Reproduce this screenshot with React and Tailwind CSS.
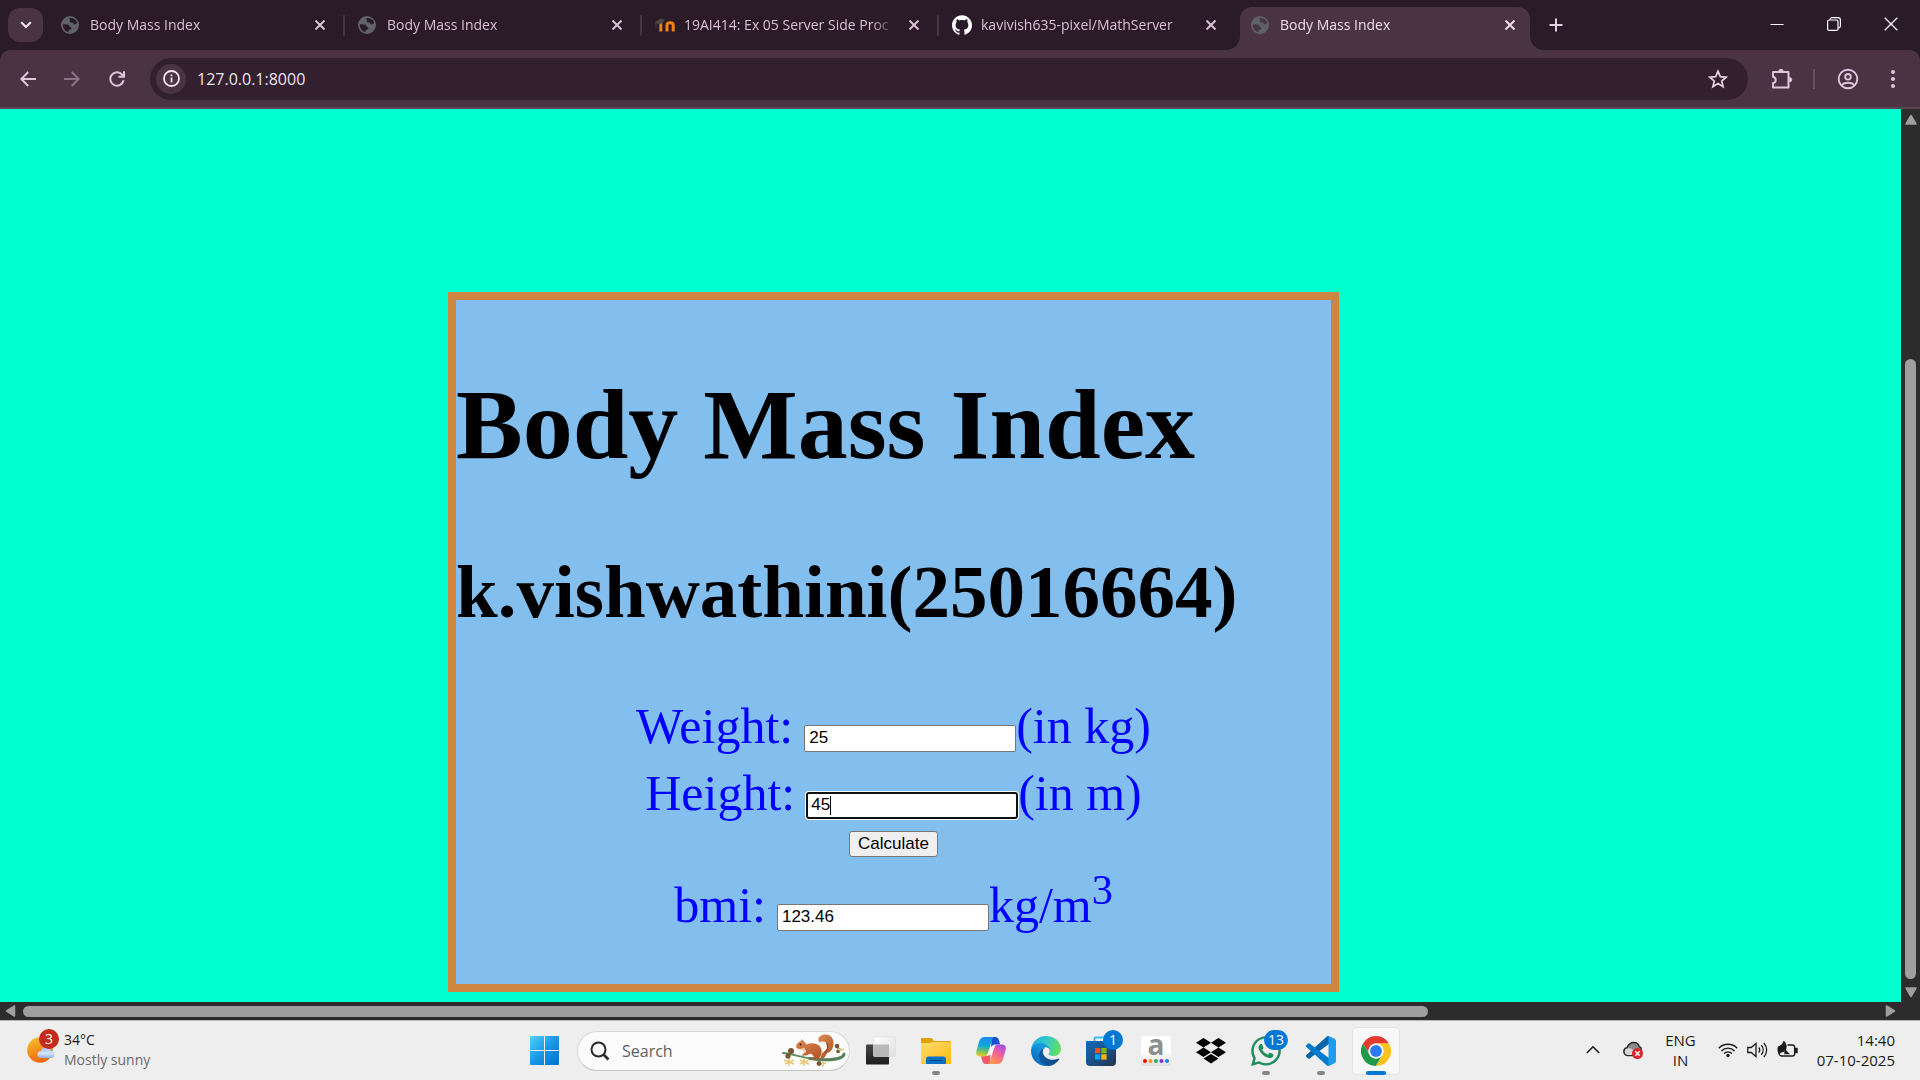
import { FaWhatsapp } from "react-icons/fa";
import { SiGithub } from "react-icons/si";

const UI = "font-['Open_Sans','Noto_Sans',sans-serif]";

function Globe({ cut }) {
  return (
    <svg viewBox="0 0 18 18" className="size-[18px] shrink-0">
      <circle cx="9" cy="9" r="9" fill="#5f6368" />
      <path
        d="M8 2.200c2.200-.6 5 .2 6.600 1.800.8.8 1.300 1.700 1.500 2.700-.8 1.200-1.700 1.900-3 1.700-.9-.2-.9-1-.8-1.800-1.200-.2-2.500.2-3.300-.6-.8-.8.2-1.600.1-2.300-.1-.6-.7-1-1.100-1.500z"
        fill={cut}
      />
      <path
        d="M1.900 8.500c1.600-.4 3.600-.3 5.300.3 1.400.5 1.200 1.900 2.400 2.400 1 .4 1.200 1.400.4 2-.8.5-1.800.4-2.300 1.200-.3.6-.1 1.200-.5 1.800C4.300 15.500 1.700 12.500 1.900 8.500z"
        fill={cut}
      />
    </svg>
  );
}

function Moodle() {
  return (
    <svg viewBox="0 0 20 18" className="h-[18px] w-5 shrink-0">
      <path d="M12 15.500V9.300c0-1.700 1-2.600 3-2.600s3.200.9 3.200 2.600v6.200" fill="none" stroke="#f98012" strokeWidth="3" />
      <path d="M5.800 15.500V6.500" stroke="#f0801a" strokeWidth="3" />
      <path d="M0 6.500 5.500 3l4 .8-4 4.200zM1 7v5" fill="#4d4844" stroke="#4d4844" strokeWidth=".8" />
    </svg>
  );
}

function Cross({ className = "size-[10px]", w = 2 }) {
  return (
    <svg viewBox="0 0 10 10" className={className} fill="none" stroke="currentColor" strokeWidth={w}>
      <path d="M.5.5l9 9M9.500.5l-9 9" />
    </svg>
  );
}

function Tab({ icon, title, active }) {
  return (
    <div
      className={
        active
          ? "relative ml-1 mt-[7px] flex h-[43px] w-[290px] min-w-0 items-center rounded-t-[12px] bg-[#4a3444] pb-[7px] pl-[11px] pr-[11px] text-[#ecdde8]"
          : "flex h-[50px] w-[297px] min-w-0 items-center pl-[13px] text-[#dabfd6]"
      }
    >
      {active && (
        <>
          <svg viewBox="0 0 14 14" className="absolute -left-[14px] bottom-0 size-[14px]">
            <path d="M14 0v14H0A14 14 0 0 0 14 0z" fill="#4a3444" />
          </svg>
          <svg viewBox="0 0 14 14" className="absolute -right-[14px] bottom-0 size-[14px]">
            <path d="M0 0v14h14A14 14 0 0 1 0 0z" fill="#4a3444" />
          </svg>
        </>
      )}
      <span className="flex w-[29px] shrink-0 items-center">{icon}</span>
      <span className="min-w-0 flex-1 overflow-hidden whitespace-nowrap text-[14px] leading-5 [mask-image:linear-gradient(to_right,black_188px,transparent_211px)]">
        {title}
      </span>
      <button aria-label={"Close " + title} className={active ? "flex size-[18px] shrink-0 items-center justify-center" : "mr-[14px] flex size-[18px] shrink-0 items-center justify-center"}>
        <Cross />
      </button>
      {!active && <span className="h-[21px] w-[2px] shrink-0 rounded bg-[#4a3444]" />}
    </div>
  );
}

function TabStrip() {
  return (
    <header className="flex h-[50px] shrink-0 bg-[#2b1b29] pl-2">
      <button aria-label="Search tabs" className="mt-2 mr-[5px] flex h-[34px] w-[35px] shrink-0 items-center justify-center rounded-[12px] bg-[#4a3444] text-[#f0e4ee]">
        <svg viewBox="0 0 12 8" className="h-[8px] w-[12px]" fill="none" stroke="currentColor" strokeWidth="2.200">
          <path d="M1.200 1.200 6 6l4.800-4.800" />
        </svg>
      </button>
      <Tab icon={<Globe cut="#2b1b29" />} title="Body Mass Index" />
      <Tab icon={<Globe cut="#2b1b29" />} title="Body Mass Index" />
      <Tab icon={<Moodle />} title="19AI414: Ex 05 Server Side Proc" />
      <div className="flex min-w-0 [&>div>span:nth-last-child(1)]:bg-transparent">
        <Tab icon={<SiGithub className="size-5 text-white" />} title="kavivish635-pixel/MathServer" />
      </div>
      <Tab active icon={<Globe cut="#4a3444" />} title="Body Mass Index" />
      <button aria-label="New tab" className="ml-[17px] flex h-[50px] w-[18px] shrink-0 items-center justify-center text-[#e6cfe2]">
        <svg viewBox="0 0 14 14" className="size-[14px]" stroke="currentColor" strokeWidth="2">
          <path d="M7 .5v13M.5 7h13" />
        </svg>
      </button>
      <div className="ml-auto flex text-white">
        <button aria-label="Minimize" className="flex h-12 w-[57px] items-center justify-center">
          <svg viewBox="0 0 14 14" className="size-[14px]" stroke="currentColor"><path d="M.5 7.500h13" /></svg>
        </button>
        <button aria-label="Restore" className="flex h-12 w-[57px] items-center justify-center">
          <svg viewBox="0 0 14 14" className="size-[14px]" fill="none" stroke="currentColor" strokeWidth="1.200">
            <rect x=".6" y="3" width="10.400" height="10.400" rx="1.500" />
            <path d="M3.200 2.800V2C3.400 1 4 .6 5 .6h6c1.600 0 2.400.8 2.400 2.400v6c0 1-.4 1.600-1.400 1.800h-.8" />
          </svg>
        </button>
        <button aria-label="Close window" className="flex h-12 w-[58px] items-center justify-center">
          <Cross className="size-[14px]" w={0.9} />
        </button>
      </div>
    </header>
  );
}

function Toolbar() {
  return (
    <div className="h-[59px] shrink-0 bg-[#2b1b29]">
      <nav className="flex h-full items-center rounded-t-[10px] border-b-2 border-[#594652] bg-[#4a3444] pl-[17px] text-[#e0c4dc]">
        <button aria-label="Back" className="flex w-[22px] justify-center">
          <svg viewBox="0 0 16 16" className="size-4" fill="none" stroke="currentColor" strokeWidth="2"><path d="M8.200 1 1.400 8l6.800 7M1.500 8H16" /></svg>
        </button>
        <button aria-label="Forward" className="ml-[22px] flex w-[22px] justify-center text-[#8a7386]">
          <svg viewBox="0 0 16 16" className="size-4" fill="none" stroke="currentColor" strokeWidth="2"><path d="M7.800 1l6.800 7-6.800 7M14.500 8H0" /></svg>
        </button>
        <button aria-label="Reload" className="ml-[23px] flex w-[22px] justify-center">
          <svg viewBox="0 0 16 16" className="size-4" fill="none" stroke="currentColor" strokeWidth="2"><path d="M14.600 9.300A6.700 6.700 0 1 1 13 3.500l1.800 1.700M15 .3v5.500H9.500" /></svg>
        </button>
        <div className="ml-[22px] flex h-[42px] min-w-0 flex-1 items-center rounded-full bg-[#33202f] pr-5 pl-[6px]">
          <button aria-label="Site information" className="flex size-[30px] shrink-0 items-center justify-center rounded-full bg-[#4a3444] text-[#f2e6f0]">
            <svg viewBox="0 0 17 17" className="size-[17px]" fill="none" stroke="currentColor" strokeWidth="1.800">
              <circle cx="8.500" cy="8.500" r="7.500" />
              <path d="M8.500 7.500v5M8.500 4.500v1.800" />
            </svg>
          </button>
          <input aria-label="Address" defaultValue="127.0.0.1:8000" className="ml-[11px] min-w-0 flex-1 bg-transparent text-[16px] leading-6 text-[#efe3ec] outline-none" />
          <button aria-label="Bookmark this page" className="text-[#e6d3e2]">
            <svg viewBox="0 0 20 20" className="size-5" fill="none" stroke="currentColor" strokeWidth="1.700"><path d="M10 2.200 12.300 7.600l5.900.5-4.500 3.900 1.400 5.700-5.100-3.100-5.100 3.100L6.300 12 1.800 8.100l5.900-.5z" /></svg>
          </button>
        </div>
        <button aria-label="Extensions" className="ml-[23px]">
          <svg viewBox="0 0 22 22" className="size-[22px]" fill="none" stroke="currentColor" strokeWidth="2">
            <path d="M3 4h14.500v15.500H2V15c3.600 0 3.600-6 0-6V4z" strokeLinejoin="round" />
            <path d="M7.800 3.500a2.200 2.200 0 0 1 4.400 0zM18.500 9.500a2.200 2.200 0 0 1 0 4.400z" fill="currentColor" stroke="currentColor" strokeWidth="1" />
          </svg>
        </button>
        <span className="ml-5 h-5 w-[2px] bg-[#664f60]" />
        <button aria-label="Profile" className="ml-[22px]">
          <svg viewBox="0 0 22 22" className="size-[22px]" fill="none" stroke="currentColor" strokeWidth="1.900">
            <circle cx="11" cy="11" r="9.300" />
            <circle cx="11" cy="8.800" r="2.800" />
            <path d="M4.500 17c3.500-3 9.500-3 13 0" />
          </svg>
        </button>
        <button aria-label="Chrome menu" className="mr-4 ml-[23px] flex w-[22px] justify-center">
          <svg viewBox="0 0 4 20" className="h-5 w-1" fill="currentColor"><circle cx="2" cy="3" r="2" /><circle cx="2" cy="10" r="2" /><circle cx="2" cy="17" r="2" /></svg>
        </button>
      </nav>
    </div>
  );
}

const FIELD = "h-[27px] w-[212px] rounded-[2px] border border-[#767676] bg-white px-1 font-['Liberation_Sans',Arial,sans-serif] text-[17px] text-black outline-none";

function BmiCard() {
  return (
    <section className="ml-[448px] w-full max-w-[891px] border-8 border-[#cd853f] bg-[#82beee] pb-[50px] font-['Liberation_Serif','Times_New_Roman',serif]">
      <h1 className="mt-[67px] whitespace-nowrap text-[100px] font-bold leading-[115px] text-black">Body Mass Index</h1>
      <h2 className="mt-[67px] whitespace-nowrap text-[75px] font-bold leading-[86px] text-black">k.vishwathini(25016664)</h2>
      <form className="mt-[62px] flex flex-col items-center text-[50px] leading-[58px] text-[#0000ff]" onSubmit={(e) => e.preventDefault()}>
        <div className="flex items-baseline">
          <label htmlFor="weight" className="mr-[11px]">Weight:</label>
          <input id="weight" defaultValue="25" className={FIELD} />
          <span>(in kg)</span>
        </div>
        <div className="mt-[9px] flex items-baseline">
          <label htmlFor="height" className="mr-[11px]">Height:</label>
          <span className="relative flex items-baseline">
            <input id="height" defaultValue="45" className="h-[27px] w-[212px] rounded-[3px] border-2 border-[#101010] bg-white px-[3px] font-['Liberation_Sans',Arial,sans-serif] text-[17px] text-black shadow-[0_0_0_1px_#ffffff] outline-none" />
            <span className="absolute inset-y-[4px] left-[24px] w-px bg-black" />
          </span>
          <span>(in m)</span>
        </div>
        <button className="mt-[9px] h-[26px] rounded-[3px] border border-[#767676] bg-[#efefef] px-2 font-['Liberation_Sans',Arial,sans-serif] text-[17px] leading-[22px] text-black">
          Calculate
        </button>
        <div className="mt-[19px] flex items-baseline">
          <label htmlFor="bmi" className="mr-[11px]">bmi:</label>
          <input id="bmi" defaultValue="123.46" className={FIELD} />
          <span>kg/m<sup className="static align-super text-[42px]">3</sup></span>
        </div>
      </form>
    </section>
  );
}

function Arrow({ d, className }) {
  return (
    <svg viewBox="0 0 12 12" className={className}>
      <path d={d} fill="#9f9f9f" stroke="#9f9f9f" strokeWidth="1.500" strokeLinejoin="round" />
    </svg>
  );
}

function Viewport() {
  return (
    <main className="grid min-h-0 flex-1 grid-cols-[minmax(0,1fr)_19px] grid-rows-[minmax(0,1fr)_18px] bg-[#2c2c2c]">
      <div className="overflow-hidden bg-[#00ffd0] pt-[183px]">
        <BmiCard />
      </div>
      <div className="flex flex-col items-center pt-[5px] pb-1">
        <Arrow d="M6 1.500 11 10H1z" className="size-3" />
        <div className="grow-[233]" />
        <div className="w-[11px] grow-[620] rounded-full bg-[#9f9f9f]" />
        <Arrow d="M6 10.500 11 2H1z" className="mt-[7px] size-3" />
      </div>
      <div className="flex items-center pr-[5px] pl-[5px]">
        <Arrow d="M1.500 6 9.500 1v10z" className="size-3" />
        <div className="ml-[6px] h-[11px] grow-[1405] rounded-full bg-[#9f9f9f]" />
        <div className="grow-[456]" />
        <Arrow d="M10.500 6 2.500 1v10z" className="size-3" />
      </div>
      <div />
    </main>
  );
}

function Weather() {
  return (
    <button className="flex items-center pb-[2px] pl-[27px] text-left">
      <span className="relative">
        <svg viewBox="0 0 30 28" className="h-7 w-[30px]">
          <defs>
            <linearGradient id="sun" x1="0" y1="0" x2=".4" y2="1"><stop offset="0" stopColor="#f7c531" /><stop offset="1" stopColor="#f0680c" /></linearGradient>
            <linearGradient id="cloud" x1="0" y1="0" x2="0" y2="1"><stop offset="0" stopColor="#9dbdf0" /><stop offset=".6" stopColor="#d3e4fa" /><stop offset="1" stopColor="#8fb0ea" /></linearGradient>
          </defs>
          <circle cx="13" cy="14" r="12.800" fill="url(#sun)" />
          <path d="M14 22a3.500 3.500 0 0 1 0-7c.6-2.600 2.600-4 5-4 2.400 0 4.200 1.400 4.800 3.600A3.700 3.700 0 0 1 24 22z" fill="url(#cloud)" />
        </svg>
        <span className="absolute -top-[7px] left-3 flex size-5 items-center justify-center rounded-full bg-[#c42b1c] text-[14px] leading-5 text-white">3</span>
      </span>
      <span className="ml-[7px] text-[14px] leading-5 text-[#1b1b1b]">
        34°C
        <br />
        <span className="text-[#6a6a6a]">Mostly sunny</span>
      </span>
    </button>
  );
}

function Squirrel() {
  return (
    <svg viewBox="0 0 64 34" className="h-[34px] w-16">
      <defs>
        <linearGradient id="fur" x1="0" y1="0" x2=".6" y2="1"><stop offset="0" stopColor="#de8a55" /><stop offset="1" stopColor="#b4582c" /></linearGradient>
      </defs>
      <path d="M1 19c10 1 20 5 33 6.500" fill="none" stroke="#5f8d63" strokeWidth="1.800" strokeLinecap="round" />
      <path d="M28 24.500c12 1.500 24 2 31-1 2-1 3-2 3-3.500" fill="none" stroke="#55805a" strokeWidth="3" strokeLinecap="round" />
      <path d="M57 19l-2-6 5 3" stroke="#6d9a5e" strokeWidth="1" fill="none" />
      <path d="M2 26l10 4M3 30l9-4M7 24v8M18 26l9 4M18 30l9-4M22 24v8M36 31l8-2M41 27v6M57 17l5-2" stroke="#e8c873" strokeWidth="1.500" />
      <path d="M40 19c4-2 7-5 5-9-1-3-5-3-8-2-2-4 1-7 6-7.500C49 0 52 5 51.500 10c-.4 5-3 8.500-6.500 9-1 3-3 6-7 6z" fill="url(#fur)" />
      <path d="M44.500 9c2 3 1 7-2 10" fill="none" stroke="#8c421f" strokeWidth="1.200" />
      <path d="M14 13c0-3 2-5 5-6l.5-2 1.500 1.500c1.500.8 2 2.500 3.500 4 4-2 10-2 13 1.500 3 3 2.500 8 .5 11-1 1.800-3 2.500-5 2.500h-4l3-3-3-3-5 2h-5l4-3c1-1 1-2 0-3-3 0-8 0-9-2.500z" fill="url(#fur)" />
      <path d="M15 14c2 1.500 5 .8 7-.5 1.500 2 2 4 1.500 5.500l-3-3c-2 .2-4.500-.4-5.500-2z" fill="#f3cba8" />
      <circle cx="18.500" cy="10.500" r=".9" fill="#2d1b12" />
      <g fill="#7a5330">
        <circle cx="9" cy="17" r="3" /><circle cx="6" cy="22" r="2.600" /><circle cx="55" cy="12" r="2.300" /><circle cx="56" cy="17.500" r="1.800" /><circle cx="37" cy="29.500" r="2.400" />
      </g>
    </svg>
  );
}

const WindowsLogo = () => (
  <svg viewBox="0 0 29 29" className="size-[29px]">
    <defs><linearGradient id="win" gradientUnits="userSpaceOnUse" x1="0" y1="0" x2="29" y2="29"><stop offset="0" stopColor="#4fd4fd" /><stop offset=".5" stopColor="#1a97e4" /><stop offset="1" stopColor="#0070cf" /></linearGradient></defs>
    <path d="M1 0h13v14H0V1a1 1 0 0 1 1-1zM15 0h13a1 1 0 0 1 1 1v13H15zM0 15h14v14H1a1 1 0 0 1-1-1zM15 15h14v13a1 1 0 0 1-1 1H15z" fill="url(#win)" />
  </svg>
);

const TaskView = () => (
  <svg viewBox="0 0 30 30" className="size-[30px]">
    <defs>
      <linearGradient id="tvd" x1="0" y1="0" x2="0" y2="1"><stop offset="0" stopColor="#454545" /><stop offset="1" stopColor="#1d1d1d" /></linearGradient>
      <linearGradient id="tvl" x1="0" y1="0" x2="1" y2="1"><stop offset="0" stopColor="#fff" /><stop offset="1" stopColor="#dedede" /></linearGradient>
    </defs>
    <rect x="0" y="8.500" width="23" height="20" rx="1" fill="url(#tvd)" />
    <rect x="7.500" y="1" width="22" height="19.500" rx="1" fill="url(#tvl)" stroke="#dcdcdc" strokeWidth=".6" />
    <path d="M8 8.500h15v12H8z" fill="#b9b9b9" />
  </svg>
);

const Folder = () => (
  <svg viewBox="0 0 30 30" className="size-[30px]">
    <defs><linearGradient id="fold" x1="0" y1="0" x2="1" y2="1"><stop offset="0" stopColor="#ffdc6e" /><stop offset="1" stopColor="#fdb913" /></linearGradient></defs>
    <path d="M1 2h8.500c1 0 1.500.4 2.200 1.200L13 5h15.500c1 0 1.500.5 1.500 1.500V12H0V3c0-.6.4-1 1-1z" fill="#e0a000" />
    <path d="M0 7h9c1.500 0 2-1 3-1h18v22H1a1 1 0 0 1-1-1z" fill="url(#fold)" />
    <path d="M5 28v-5c0-1.500 1-2.500 2.500-2.500h15c1.500 0 2.500 1 2.500 2.500v5z" fill="#0b70c4" />
    <path d="M8.500 24.500h13" stroke="#074a88" strokeWidth="1.200" strokeLinecap="round" />
  </svg>
);

const Copilot = () => (
  <svg viewBox="0 0 30 30" className="size-[30px]">
    <defs>
      <linearGradient id="cp1" x1=".4" y1="0" x2=".3" y2="1"><stop offset="0" stopColor="#1a8df0" /><stop offset=".45" stopColor="#0fa9d6" /><stop offset=".7" stopColor="#6cc070" /><stop offset="1" stopColor="#f0cb20" /></linearGradient>
      <linearGradient id="cp2" x1=".8" y1="0" x2=".3" y2="1"><stop offset="0" stopColor="#a04ff0" /><stop offset=".45" stopColor="#f0609c" /><stop offset="1" stopColor="#ff9a4a" /></linearGradient>
      <linearGradient id="cp3" x1="0" y1="0" x2="1" y2="1"><stop offset="0" stopColor="#1846c8" /><stop offset="1" stopColor="#1c5ee0" /></linearGradient>
    </defs>
    <path d="M15 1h4c2.500 0 3.500 1.500 4.200 4l1 3.500h-5c-2 0-3.200 1-3.800 3z" fill="url(#cp3)" />
    <path d="M14 28H10c-2.500 0-3.400-1.500-4-4l-1-4h6c2 0 3-1 3.600-3z" fill="#f25a6a" />
    <path d="M9 1h9c-1.500 1-2 2.500-2.600 4.500L12 17c-.7 2.500-2 3.500-4.500 3.500H4C.8 20.500-.3 18.500.4 15L3 6c1-3.300 2.500-5 6-5z" fill="url(#cp1)" />
    <path d="M21 28h-9c1.500-1 2-2.500 2.600-4.500L18 12c.7-2.500 2-3.500 4.500-3.500H26c3.200 0 4.300 2 3.600 5.500L27 23c-1 3.300-2.500 5-6 5z" fill="url(#cp2)" />
    <path d="M16.500 10.500h2.300L14.500 19h-3z" fill="#fff" />
  </svg>
);

const Edge = () => (
  <svg viewBox="0 0 256 256" className="size-[30px]">
    <defs>
      <linearGradient id="e1" x1="0" y1="0" x2="1" y2="0"><stop offset="0" stopColor="#0c59a4" /><stop offset="1" stopColor="#114a8b" /></linearGradient>
      <linearGradient id="e2" x1="1" y1="0" x2=".3" y2="1"><stop offset="0" stopColor="#1b9de2" /><stop offset=".4" stopColor="#1595df" /><stop offset="1" stopColor="#0b68bd" /></linearGradient>
      <linearGradient id="e3" x1="0" y1=".3" x2="1" y2=".5"><stop offset="0" stopColor="#2aa9e8" /><stop offset=".45" stopColor="#2fc6cf" /><stop offset="1" stopColor="#66e05c" /></linearGradient>
    </defs>
    <path d="M235.680 192.460a93.730 93.730 0 0 1-10.540 4.710 101.870 101.870 0 0 1-35.900 6.460c-47.320 0-88.540-32.550-88.540-74.320A31.480 31.480 0 0 1 117.130 102c-42.800 1.800-53.800 46.400-53.800 72.530 0 73.880 68.090 81.370 82.760 81.370 7.910 0 19.840-2.300 27-4.560l1.310-.44a128.340 128.340 0 0 0 66.600-52.800 4 4 0 0 0-5.320-5.640z" fill="url(#e1)" />
    <path d="M105.730 241.420A79.200 79.200 0 0 1 83 220.080a80.720 80.720 0 0 1 29.530-120c3.120-1.470 8.450-4.130 15.540-4a32.350 32.350 0 0 1 25.690 13 31.880 31.880 0 0 1 6.360 18.660c0-.21 24.460-79.600-80-79.600-43.900 0-80 41.660-80 78.210a130.150 130.150 0 0 0 12.110 56 128 128 0 0 0 156.380 67.110 75.550 75.550 0 0 1-62.780-8z" fill="url(#e2)" />
    <path d="M152.330 148.860c-.81 1.050-3.300 2.500-3.300 5.660 0 2.610 1.700 5.120 4.720 7.230 14.380 10 41.490 8.680 41.560 8.680a59.560 59.560 0 0 0 30.270-8.350A61.380 61.380 0 0 0 256 109.200c.26-22.410-8-37.310-11.340-43.910C223.460 23.840 177.720 0 128 0A128 128 0 0 0 0 126.200c.48-36.540 36.800-66.050 80-66.050 3.500 0 23.460.34 42 10.070 16.340 8.580 24.900 18.940 30.850 29.210 6.180 10.670 7.280 24.150 7.280 29.520s-2.740 13.330-7.800 19.910z" fill="url(#e3)" />
  </svg>
);

const Store = () => (
  <svg viewBox="0 0 30 30" className="size-[30px]">
    <defs><linearGradient id="st" x1="0" y1="0" x2="1" y2="1"><stop offset="0" stopColor="#0f6cbd" /><stop offset="1" stopColor="#273350" /></linearGradient></defs>
    <path d="M8.500 7V2.500c0-.6.4-1 1-1h11c.6 0 1 .4 1 1V7" fill="none" stroke="#35c1f1" strokeWidth="2" />
    <path d="M0 6c0-.6.4-1 1-1h28c.6 0 1 .4 1 1v20a4 4 0 0 1-4 4H4a4 4 0 0 1-4-4z" fill="url(#st)" />
    <path d="M9 12h5.300v5.300H9z" fill="#f25022" /><path d="M15.300 12h5.300v5.300h-5.300z" fill="#7fba00" />
    <path d="M9 18.300h5.300v5.300H9z" fill="#00a4ef" /><path d="M15.300 18.300h5.300v5.300h-5.300z" fill="#ffb900" />
  </svg>
);

const AmazonMusic = () => (
  <span className="flex size-[30px] flex-col items-center bg-linear-to-b from-white from-50% to-[#dfdfdf]">
    <span className="h-[23px] font-['Open_Sans',sans-serif] text-[28px] font-bold leading-[17px] text-[#8f8f8f]">a</span>
    <svg viewBox="0 0 26 4" className="h-1 w-[26px]">
      <circle cx="2" cy="2" r="2" fill="#f00" /><circle cx="7.500" cy="2" r="2" fill="#f7931e" /><circle cx="13" cy="2" r="2" fill="#22b455" /><circle cx="18.500" cy="2" r="2" fill="#8a2be2" /><circle cx="24" cy="2" r="2" fill="#0a84e8" />
    </svg>
  </span>
);

const Dropbox = () => (
  <svg viewBox="0 0 30 30" className="size-[30px]">
    <path d="M7.500 2 15 6.700l-7.500 4.800L0 6.700zM22.500 2 30 6.700l-7.500 4.800L15 6.700zM7.500 11.500 15 16.300 7.500 21 0 16.300zM22.500 11.500l7.500 4.800-7.500 4.700-7.500-4.700zM7.500 22.600 15 17.900l7.500 4.700L15 27.400z" />
  </svg>
);

const VsCode = () => (
  <svg viewBox="0 0 100 100" className="size-[30px]">
    <path d="M96.500 10.800 75.900.9a6.200 6.200 0 0 0-7.100 1.200L1.300 63.600a4.200 4.200 0 0 0 0 6.200l5.500 5a4.200 4.200 0 0 0 5.300.2L93.400 13.400c2.700-2 6.600-.1 6.600 3.300z" fill="#0065a9" />
    <path d="M96.500 89.200 75.900 99.100a6.200 6.200 0 0 1-7.100-1.200L1.300 36.400a4.200 4.200 0 0 1 0-6.200l5.500-5a4.200 4.200 0 0 1 5.300-.2l81.300 61.600c2.700 2 6.600.1 6.600-3.300z" fill="#007acc" />
    <path d="M75.900 99.100a6.200 6.200 0 0 1-7.100-1.200c2.300 2.300 6.200.7 6.200-2.600V4.700c0-3.300-3.900-4.900-6.200-2.600a6.200 6.200 0 0 1 7.100-1.200l20.600 9.900A6.200 6.200 0 0 1 100 16.500v67a6.200 6.200 0 0 1-3.500 5.600z" fill="#1f9cf0" />
  </svg>
);

const Chrome = () => (
  <svg viewBox="0 0 48 48" className="size-[30px]">
    <path d="M24 12h20.785A24 24 0 0 0 3.215 12L13.600 30A12 12 0 0 1 24 12z" fill="#e33b2e" />
    <path d="M34.390 30 24 48A24 24 0 0 1 3.215 12L13.600 30a12 12 0 0 0 20.790 0z" fill="#1e9a4a" />
    <path d="M24 12h20.785A24 24 0 0 1 24 48l10.390-18A12 12 0 0 0 24 12z" fill="#fcc31e" />
    <circle cx="24" cy="24" r="12" fill="#fff" /><circle cx="24" cy="24" r="9.500" fill="#2a7af0" />
  </svg>
);

function TaskButton({ label, children, badge, state }) {
  return (
    <button aria-label={label} className={state === "active" ? "relative flex size-12 shrink-0 items-center justify-center rounded-[5px] border border-[#e3e3e3] bg-[#f8f8f8]" : "relative flex size-12 shrink-0 items-center justify-center"}>
      {children}
      {badge && (
        <span className="absolute top-[3px] right-[2px] flex h-5 min-w-5 items-center justify-center rounded-full bg-[#0078d4] px-1 text-[14px] leading-5 text-white">{badge}</span>
      )}
      {state === "open" && <span className="absolute bottom-0 h-1 w-2 rounded-full bg-[#868686]" />}
      {state === "active" && <span className="absolute -bottom-px h-1 w-5 rounded-full bg-[#0078d4]" />}
    </button>
  );
}

function Tray() {
  return (
    <div className="flex items-center justify-end pr-[25px] pb-[2px] text-[15px] leading-5 text-[#1b1b1b]">
      <button aria-label="Show hidden icons" className="mr-[23px]">
        <svg viewBox="0 0 14 14" className="size-[14px]" fill="none" stroke="currentColor" strokeWidth="1.600"><path d="M.8 10 7 3.800l6.200 6.200" /></svg>
      </button>
      <button aria-label="OneDrive" className="mr-[22px]">
        <svg viewBox="0 0 20 18" className="h-[18px] w-5">
          <path d="M4.500 14.500A4 4 0 0 1 4 6.600C5.500 3 8 1.500 11 1.500c2.600 0 4.500 1.400 5.200 4 1.500.6 2.300 2 2.300 3.500 0 3-2 5.500-4.500 5.500z" fill="#8c8c8c" stroke="#2b2b2b" strokeWidth="1.400" />
          <path d="M3 8c3-1.500 5-1 7 1l4 5H5C2 14 1 10 3 8z" fill="#d7d7d7" />
          <circle cx="14.500" cy="12.500" r="5.500" fill="#d9232e" /><path d="M12.300 10.300l4.400 4.400M16.700 10.300l-4.400 4.400" stroke="#fff" strokeWidth="1.400" />
        </svg>
      </button>
      <button className="mr-[22px] text-center">ENG<br />IN</button>
      <button aria-label="Network, volume and battery" className="mr-[19px] flex gap-[9px]">
        <svg viewBox="0 0 20 18" className="h-[18px] w-5" fill="none" stroke="currentColor" strokeWidth="1.400">
          <path d="M.8 7.200c5-5.200 13.400-5.200 18.400 0M3.400 9.900c3.600-3.700 9.600-3.700 13.200 0M6 12.600c2.200-2.300 5.800-2.300 8 0" /><circle cx="10" cy="14.500" r="1.700" fill="currentColor" stroke="none" />
        </svg>
        <svg viewBox="0 0 21 18" className="h-[18px] w-[21px]" fill="none" stroke="currentColor" strokeWidth="1.300">
          <path d="M.8 6.500h3.400L9 2.500v13l-4.800-4H.8zM11.800 6.500c1.200 1.500 1.200 3.500 0 5M14.300 4.300c2.500 2.800 2.500 6.600 0 9.400M16.800 2c3.800 4 3.800 10 0 14" />
        </svg>
        <svg viewBox="0 0 21 18" className="h-[18px] w-[21px]" fill="none" stroke="currentColor" strokeWidth="1.300">
          <path d="M10.500 4h5c1.400 0 2.100.7 2.100 2.100v6.800c0 1.400-.7 2.100-2.100 2.100H4.500C3.200 15 2.500 14.500 2.400 13.300" />
          <path d="M18.300 7.500h1.700v4h-1.700z" fill="currentColor" />
          <path d="M6.500-.5c3 2.500 4 6 2.500 9-1 2-3 3-5 3l-2 2.500C.5 11 0 8 1 5.500 2.500 5 5.500 4 6.500-.5z" fill="currentColor" stroke="none" />
          <path d="M8 9v3.500h3.500z" fill="currentColor" />
        </svg>
      </button>
      <button className="text-right">14:40<br />07-10-2025</button>
    </div>
  );
}

function Taskbar() {
  return (
    <footer className="grid h-[60px] shrink-0 grid-cols-[1fr_auto_1fr] items-center border-t border-[#b9b9b9] bg-[#eeeeee]">
      <Weather />
      <div className="flex items-center">
        <TaskButton label="Start"><WindowsLogo /></TaskButton>
        <label className="mr-[7px] ml-[9px] flex h-10 w-[273px] items-center rounded-full border border-[#d9d9d9] border-b-[#c4c4c4] bg-[#fbfbfb] pr-[3px] pl-3">
          <svg viewBox="0 0 20 20" className="size-5 shrink-0" fill="none" stroke="#2b2b2b" strokeWidth="2"><circle cx="8.500" cy="8.500" r="7" /><path d="M13.500 13.500l5 5" strokeWidth="2.600" /></svg>
          <input aria-label="Search" placeholder="Search" className="ml-3 min-w-0 flex-1 bg-transparent text-[16px] leading-6 outline-none placeholder:text-[#5f5f5f]" />
          <Squirrel />
        </label>
        <div className="flex gap-[7px]">
          <TaskButton label="Task view"><TaskView /></TaskButton>
          <TaskButton label="File Explorer" state="open"><Folder /></TaskButton>
          <TaskButton label="Copilot"><Copilot /></TaskButton>
          <TaskButton label="Edge"><Edge /></TaskButton>
          <TaskButton label="Microsoft Store" badge="1"><Store /></TaskButton>
          <TaskButton label="Amazon"><AmazonMusic /></TaskButton>
          <TaskButton label="Dropbox"><Dropbox /></TaskButton>
          <TaskButton label="WhatsApp" badge="13" state="open"><FaWhatsapp className="size-[34px] text-[#1f8f5b]" /></TaskButton>
          <TaskButton label="Visual Studio Code" state="open"><VsCode /></TaskButton>
          <TaskButton label="Chrome" state="active"><Chrome /></TaskButton>
        </div>
      </div>
      <Tray />
    </footer>
  );
}

export default function App() {
  return (
    <div className={"flex h-screen w-full flex-col overflow-hidden " + UI}>
      <TabStrip />
      <Toolbar />
      <Viewport />
      <Taskbar />
    </div>
  );
}
